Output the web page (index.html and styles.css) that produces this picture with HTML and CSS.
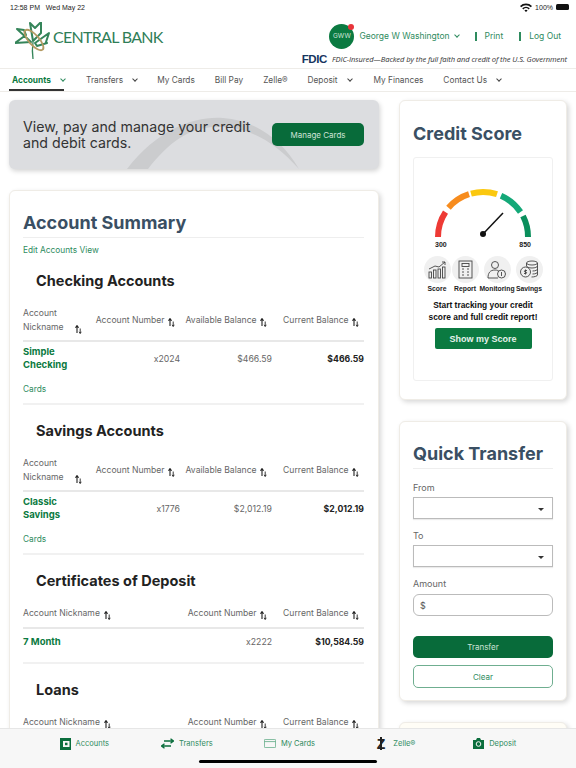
FILE: index.html
```html
<!doctype html>
<html lang="en">
<head>
    <meta charset="UTF-8">
    <title>Central Bank</title>
    <link rel="stylesheet" href="styles.css">
</head>
<body>
<svg class="defs" width="0" height="0">
    <symbol id="sort" viewBox="0 0 7 9">
        <path d="M2 8V1.800M.4 2.800L2 .6l1.600 2.200" fill="none" stroke="#222" stroke-width="1.100"/>
        <path d="M5.200 3.500V8M4.200 6.800L5.200 8.600l1-1.800" fill="none" stroke="#222" stroke-width=".9"/>
    </symbol>
</svg>

<div class="status">
    <span>12:58 PM &nbsp; Wed May 22</span>
    <span class="status-right">
        <svg width="12" height="9" viewBox="0 0 12 9"><path d="M0 3a8.500 8.500 0 0 1 12 0L10.800 4.300a6.800 6.800 0 0 0-9.600 0zM2.200 5.200a5.400 5.400 0 0 1 7.600 0L8.600 6.400a3.700 3.700 0 0 0-5.200 0zM4.400 7.400a2.300 2.300 0 0 1 3.200 0L6 9z" fill="#111"/></svg>
        100%
        <span class="battery"></span>
    </span>
</div>

<header class="top">
    <div class="logo">
        <svg width="38" height="38" viewBox="0 0 38 38">
            <g fill="none" stroke="#35855a" stroke-width="2" stroke-linejoin="round">
                <path d="M18 19L15 1l5 5 6-6v11z"/>
                <path d="M16 20L2 7l7 1 2 5-11 8z"/>
                <path d="M20 21L34 11l-3 9 1 1-10 3z"/>
            </g>
            <path d="M18 20c-1 7-1 10 0 17" fill="none" stroke="#35855a" stroke-width="1.300"/>
            <ellipse cx="19" cy="18" rx="5" ry="13" transform="rotate(-42 19 18)" fill="none" stroke="#b49a62" stroke-width="1.800"/>
        </svg>
        <span class="logo-text">CENTRAL BANK</span>
    </div>
    <div class="top-right">
        <div class="user-row">
            <div class="avatar">GWW<span class="avatar-dot"></span></div>
            <span class="user-name">George W Washington</span>
            <span class="chev chev-green user-chev"></span>
            <a class="top-link">Print</a>
            <a class="top-link">Log Out</a>
        </div>
        <div class="fdic-row">
            <span class="fdic-logo">FDIC</span>
            <span class="fdic-text">FDIC-Insured—Backed by the full faith and credit of the U.S. Government</span>
        </div>
    </div>
</header>

<nav class="nav">
    <a class="nav-item active">Accounts<span class="chev chev-green"></span></a>
    <a class="nav-item">Transfers<span class="chev"></span></a>
    <a class="nav-item">My Cards</a>
    <a class="nav-item">Bill Pay</a>
    <a class="nav-item">Zelle®</a>
    <a class="nav-item nav-deposit">Deposit<span class="chev"></span></a>
    <a class="nav-item">My Finances</a>
    <a class="nav-item">Contact Us<span class="chev"></span></a>
</nav>

<main class="main">
    <div class="left">
        <section class="banner">
            <svg class="banner-arc" width="370" height="69" viewBox="0 0 370 69"><path d="M118 69C150 28 186 16 214 18c30 2 58 20 76 51C262 38 236 26 206 27 180 28 160 42 139 69z" fill="#cbccce"/></svg>
            <p class="banner-text">View, pay and manage your credit and debit cards.</p>
            <a class="btn btn-green banner-btn">Manage Cards</a>
        </section>

        <section class="card summary">
            <h1 class="card-title">Account Summary</h1>
            <a class="link edit-link">Edit Accounts View</a>

            <h2 class="group-title">Checking Accounts</h2>
            <table class="accounts">
                <colgroup><col class="c-name"><col class="c-mid"><col class="c-bal"><col class="c-bal"></colgroup>
                <tr>
                    <th class="th-name">Account Nickname <svg class="sort"><use href="#sort"/></svg></th>
                    <th>Account Number <svg class="sort"><use href="#sort"/></svg></th>
                    <th>Available Balance <svg class="sort"><use href="#sort"/></svg></th>
                    <th>Current Balance <svg class="sort"><use href="#sort"/></svg></th>
                </tr>
                <tr>
                    <td class="acct-name">Simple Checking</td>
                    <td>x2024</td>
                    <td>$466.59</td>
                    <td class="strong">$466.59</td>
                </tr>
            </table>
            <div class="cards-row"><a class="link">Cards</a></div>

            <h2 class="group-title">Savings Accounts</h2>
            <table class="accounts">
                <colgroup><col class="c-name"><col class="c-mid"><col class="c-bal"><col class="c-bal"></colgroup>
                <tr>
                    <th class="th-name">Account Nickname <svg class="sort"><use href="#sort"/></svg></th>
                    <th>Account Number <svg class="sort"><use href="#sort"/></svg></th>
                    <th>Available Balance <svg class="sort"><use href="#sort"/></svg></th>
                    <th>Current Balance <svg class="sort"><use href="#sort"/></svg></th>
                </tr>
                <tr>
                    <td class="acct-name">Classic Savings</td>
                    <td>x1776</td>
                    <td>$2,012.19</td>
                    <td class="strong">$2,012.19</td>
                </tr>
            </table>
            <div class="cards-row"><a class="link">Cards</a></div>

            <h2 class="group-title">Certificates of Deposit</h2>
            <table class="accounts three">
                <colgroup><col class="c-wide"><col class="c-bal"><col class="c-bal"></colgroup>
                <tr>
                    <th class="th-name">Account Nickname <svg class="sort"><use href="#sort"/></svg></th>
                    <th>Account Number <svg class="sort"><use href="#sort"/></svg></th>
                    <th>Current Balance <svg class="sort"><use href="#sort"/></svg></th>
                </tr>
                <tr class="row-line">
                    <td class="acct-name">7 Month</td>
                    <td>x2222</td>
                    <td class="strong">$10,584.59</td>
                </tr>
            </table>

            <h2 class="group-title">Loans</h2>
            <table class="accounts three">
                <colgroup><col class="c-wide"><col class="c-bal"><col class="c-bal"></colgroup>
                <tr>
                    <th class="th-name">Account Nickname <svg class="sort"><use href="#sort"/></svg></th>
                    <th>Account Number <svg class="sort"><use href="#sort"/></svg></th>
                    <th>Current Balance <svg class="sort"><use href="#sort"/></svg></th>
                </tr>
            </table>
        </section>
    </div>

    <aside class="right">
        <section class="card score-card">
            <h1 class="card-title no-rule">Credit Score</h1>
            <div class="score-box">
                <svg class="gauge" width="100" height="56" viewBox="0 0 100 56">
                    <g fill="none" stroke-width="6">
                        <path d="M5 52A45 45 0 0 1 12.500 27.200" stroke="#ee3a35"/>
                        <path d="M15.500 22.800A45 45 0 0 1 36 9.200" stroke="#f78c1e"/>
                        <path d="M38 8.600A45 45 0 0 1 64 9.200" stroke="#fbc80f"/>
                        <path d="M68 10.700A45 45 0 0 1 87.500 27" stroke="#14a878"/>
                        <path d="M90 31A45 45 0 0 1 95 52" stroke="#0a8f5c"/>
                    </g>
                    <path d="M50 49L70 28" stroke="#111" stroke-width="1.500"/>
                    <circle cx="50" cy="49" r="3" fill="#111"/>
                </svg>
                <div class="gauge-labels"><span>300</span><span>850</span></div>
                <div class="features">
                    <div class="feature">
                        <span class="feature-icon">
                            <svg width="19" height="19" viewBox="0 0 19 19" fill="none" stroke="#444" stroke-width=".9"><rect x="1" y="12" width="2.500" height="6"/><rect x="5.500" y="10" width="2.500" height="8"/><rect x="10" y="9" width="2.500" height="9"/><rect x="14.500" y="7" width="2.500" height="11"/><path d="M1 9l6-3 4 1 6-5M14 2h3v3"/></svg>
                        </span>
                        <span>Score</span>
                    </div>
                    <div class="feature">
                        <span class="feature-icon">
                            <svg width="17" height="19" viewBox="0 0 17 19" fill="none" stroke="#444" stroke-width=".9"><rect x="2" y="1" width="13" height="17"/><rect x="5" y="3.500" width="7" height="3"/><path d="M5 9h2M5 12h2M5 15h2M10 9h2M10 12h2M10 15h2"/></svg>
                        </span>
                        <span>Report</span>
                    </div>
                    <div class="feature">
                        <span class="feature-icon">
                            <svg width="20" height="20" viewBox="0 0 20 20" fill="none" stroke="#444" stroke-width=".9"><circle cx="8" cy="5" r="3.500"/><path d="M1 18c0-5 2-8 7-8 2 0 3 .5 4 1.500M1 18h10"/><circle cx="14.500" cy="14" r="4"/><path d="M14.500 12v4"/></svg>
                        </span>
                        <span>Monitoring</span>
                    </div>
                    <div class="feature">
                        <span class="feature-icon">
                            <svg width="20" height="19" viewBox="0 0 20 19" fill="none" stroke="#444" stroke-width=".9"><ellipse cx="13" cy="3" rx="5.500" ry="2"/><path d="M7.500 3v3c0 1 2.500 2 5.500 2s5.500-1 5.500-2V3M18.500 6v3c0 1-2 2-5 2M18.500 9v3c0 1-2 2-5 2M18.500 12v3c0 1-3 2-6 2"/><circle cx="6.500" cy="12" r="5"/><path d="M6.500 9.500v5M8 10.500H5.800a1 1 0 0 0 0 1.500h1.400a1 1 0 0 1 0 1.500H5"/></svg>
                        </span>
                        <span>Savings</span>
                    </div>
                </div>
                <p class="score-text">Start tracking your credit score and full credit report!</p>
                <a class="score-btn">Show my Score</a>
            </div>
        </section>

        <section class="card transfer-card">
            <h1 class="card-title">Quick Transfer</h1>
            <label class="field-label">From</label>
            <div class="select"></div>
            <label class="field-label">To</label>
            <div class="select"></div>
            <label class="field-label">Amount</label>
            <div class="amount">$</div>
            <a class="btn btn-green transfer-btn">Transfer</a>
            <a class="btn btn-outline">Clear</a>
        </section>

        <section class="card next-card"></section>
    </aside>
</main>

<footer class="tabbar">
    <div class="tabs">
        <a class="tab">
            <svg width="11" height="12" viewBox="0 0 11 12"><path d="M0 0h11v12H0z" fill="#0b6e3d"/><rect x="3" y="3" width="6.500" height="6" fill="#f6f6f6"/><rect x="5" y="4.700" width="2.500" height="2.500" fill="#0b6e3d"/></svg>
            Accounts
        </a>
        <a class="tab">
            <svg width="13" height="11" viewBox="0 0 13 11" fill="none" stroke="#0b6e3d" stroke-width="1.400"><path d="M3 3h9M9.500 .8L12.500 3 9.500 5.200" /><path d="M10 8H1M3.500 5.800L.5 8l3 2.200"/></svg>
            Transfers
        </a>
        <a class="tab">
            <svg width="12" height="9" viewBox="0 0 12 9" fill="none" stroke="#5aa882" stroke-width=".8"><rect x=".4" y=".4" width="11.200" height="8.200" rx=".8"/><path d="M.4 2.600h11.200"/></svg>
            My Cards
        </a>
        <a class="tab">
            <span class="zelle-icon">Z</span>
            Zelle®
        </a>
        <a class="tab">
            <svg width="11" height="11" viewBox="0 0 11 11"><path d="M0 2h3l1-2h3l1 2h3v9H0z" fill="#0b6e3d"/><circle cx="5.500" cy="6" r="2.300" fill="none" stroke="#f6f6f6" stroke-width="1"/></svg>
            Deposit
        </a>
    </div>
    <div class="home-bar"></div>
</footer>
</body>
</html>
```

FILE: styles.css
```css
* {
    margin: 0;
    padding: 0;
    box-sizing: border-box;
}

html, body {
    height: 768px;
    overflow: hidden;
}

body {
    position: relative;
    font-family: Inter, "Open Sans", sans-serif;
    font-size: 9px;
    color: #555;
    background: #fff;
}

.defs {
    position: absolute;
}

/* status bar */
.status {
    display: flex;
    justify-content: space-between;
    align-items: center;
    height: 14px;
    padding: 0 7px 0 10px;
    font-family: "Liberation Sans", sans-serif;
    font-size: 7px;
    color: #222;
}

.status-right {
    display: flex;
    align-items: center;
    gap: 3px;
}

.battery {
    width: 13px;
    height: 6px;
    background: #111;
    border-radius: 1.5px;
}

/* header */
.top {
    display: flex;
    justify-content: space-between;
    height: 54px;
    padding: 8px 9px 0 15px;
}

.logo {
    display: flex;
    align-items: flex-start;
    height: 38px;
}

.logo-text {
    margin-top: 6px;
    font-family: Lato, sans-serif;
    font-size: 16px;
    line-height: 18px;
    letter-spacing: -0.7px;
    color: #2f7e57;
    white-space: nowrap;
}

.top-right {
    display: flex;
    flex-direction: column;
    align-items: flex-end;
}

.user-row {
    display: flex;
    align-items: center;
    height: 26px;
    margin: 1px 6px 0 0;
    color: #2e8b5e;
    font-size: 8.500px;
}

.avatar {
    position: relative;
    display: flex;
    justify-content: center;
    align-items: center;
    width: 25px;
    height: 25px;
    margin-right: 5px;
    border-radius: 50%;
    background: #0b7a41;
    color: #cfe3d8;
    font-size: 6.500px;
}

.avatar-dot {
    position: absolute;
    top: 0;
    right: 0;
    width: 6px;
    height: 6px;
    border-radius: 50%;
    background: #e8343a;
}

.top-link {
    margin-left: 16px;
    padding-left: 8px;
    border-left: 2px solid #2e8b5e;
    line-height: 9px;
    height: 9px;
}

.fdic-row {
    display: flex;
    align-items: center;
    gap: 5px;
    margin-top: 4px;
}

.fdic-logo {
    font-family: "Liberation Sans", sans-serif;
    font-weight: bold;
    font-size: 11.500px;
    color: #17365f;
    letter-spacing: -0.4px;
}

.fdic-text {
    font-family: "Open Sans", sans-serif;
    font-style: italic;
    font-size: 7.600px;
    letter-spacing: -0.1px;
    color: #333;
    white-space: nowrap;
}

/* nav */
.nav {
    display: flex;
    height: 24px;
    border-top: 1px solid #eeece8;
    border-bottom: 1px solid #eeece8;
    padding-left: 9px;
}

.nav-item {
    display: flex;
    align-items: center;
    height: 22px;
    padding: 1px 3px 0;
    margin-right: 14px;
    border-bottom: 2px solid transparent;
    font-size: 8.300px;
    color: #555;
    white-space: nowrap;
}

.nav-item.active {
    width: 55px;
    margin-right: 19px;
    color: #0b7a41;
    font-weight: 700;
    border-bottom-color: #333;
}

.nav-item.nav-deposit {
    margin-right: 16px;
}

.chev {
    flex-shrink: 0;
    display: inline-block;
    width: 4px;
    height: 4px;
    margin: -2px 0 0 10px;
    border-right: 1px solid #444;
    border-bottom: 1px solid #444;
    transform: rotate(45deg);
}

.chev-green {
    border-color: #2e8b5e;
}

.chev.user-chev {
    margin-left: 5px;
}

/* page columns */
.main {
    display: flex;
    gap: 20px;
    padding: 8px 9px 0;
}

.left {
    width: 370px;
}

.right {
    width: 168px;
}

.card {
    background: #fff;
    border: 1px solid #efece6;
    border-radius: 6px;
    box-shadow: 2px 2px 5px rgba(0, 0, 0, .16);
}

.card-title {
    padding-bottom: 2px;
    border-bottom: 1px solid #eee;
    font-size: 18px;
    line-height: 24px;
    font-weight: 700;
    color: #3a4f63;
}

.card-title.no-rule {
    border-bottom: 0;
}

.link {
    color: #2e8b5e;
    font-size: 8.300px;
}

/* banner */
.banner {
    position: relative;
    display: flex;
    justify-content: space-between;
    align-items: center;
    height: 69px;
    padding: 0 15px 0 14px;
    background: #dcdde0;
    border-radius: 6px;
    box-shadow: 1px 2px 5px rgba(0, 0, 0, .18);
    overflow: hidden;
}

.banner-arc {
    position: absolute;
    left: 0;
    top: 0;
}

.banner-text {
    position: relative;
    width: 238px;
    font-size: 14.200px;
    line-height: 15.500px;
    color: #333;
}

.btn {
    display: flex;
    justify-content: center;
    align-items: center;
    height: 23px;
    border-radius: 5px;
    font-size: 8px;
}

.btn-green {
    background: #086b3a;
    color: #cfe3d8;
}

.btn-outline {
    border: 1px solid #6fae90;
    color: #2e8b5e;
}

.banner-btn {
    position: relative;
    width: 92px;
}

/* account summary */
.summary {
    height: 600px;
    margin-top: 21px;
    padding: 20px 14px 0 13px;
}

.edit-link {
    display: block;
    margin: 6px 0 -1px;
    line-height: 12px;
}

.group-title {
    margin: 16px 0 0 13px;
    font-size: 14.500px;
    line-height: 20px;
    font-weight: 700;
    color: #222;
}

.accounts {
    width: 341px;
    margin-top: 8px;
    border-collapse: collapse;
    table-layout: fixed;
}

.c-name { width: 67px; }
.c-mid { width: 90px; }
.c-bal { width: 92px; }
.c-wide { width: 157px; }

.accounts th {
    height: 42px;
    padding-right: 5px;
    border-bottom: 2px solid #e8e8e8;
    font-weight: 400;
    font-size: 8.600px;
    line-height: 14px;
    text-align: right;
    color: #666;
    white-space: nowrap;
}

.accounts th.th-name {
    padding: 0;
    text-align: left;
    white-space: normal;
}

.three th {
    height: 29px;
}

.three th.th-name {
    white-space: nowrap;
}

.sort {
    width: 7px;
    height: 9px;
    margin-left: 1px;
    vertical-align: -4px;
}

.th-name .sort {
    margin-left: 9px;
}

.three .th-name .sort {
    margin-left: 2px;
}

.accounts td {
    height: 34px;
    text-align: right;
    color: #666;
    font-size: 8.700px;
}

.accounts td.acct-name {
    padding-bottom: 1px;
    text-align: left;
    line-height: 13.500px;
    font-size: 9.500px;
    font-weight: 700;
    color: #0b7a41;
}

.accounts td.strong {
    font-weight: 700;
    color: #222;
}

.accounts .row-line td {
    height: 35px;
    padding-bottom: 8px;
    border-bottom: 2px solid #f1f1f1;
}

.cards-row {
    height: 30px;
    padding-top: 8px;
    border-bottom: 2px solid #f1f1f1;
    line-height: 12px;
}

/* credit score */
.score-card {
    height: 300px;
    padding: 21px 13px 0;
}

.score-box {
    display: flex;
    flex-direction: column;
    align-items: center;
    height: 224px;
    margin-top: 9px;
    padding-top: 27px;
    border: 1px solid #f0f0f0;
    border-radius: 3px;
    font-family: "Liberation Sans", sans-serif;
    color: #222;
}

.gauge-labels {
    display: flex;
    justify-content: space-between;
    width: 96px;
    margin-top: 0;
    font-size: 7px;
    font-weight: 700;
}

.features {
    display: grid;
    grid-template-columns: 28px 28px 36px 28px;
    margin-top: 8px;
}

.feature {
    display: flex;
    flex-direction: column;
    align-items: center;
    gap: 2px;
    font-size: 6.800px;
    font-weight: 700;
    white-space: nowrap;
}

.feature-icon {
    display: flex;
    justify-content: center;
    align-items: center;
    width: 27px;
    height: 27px;
    border-radius: 50%;
    background: #f0f0f0;
}

.score-text {
    width: 115px;
    margin-top: 8px;
    font-size: 8.400px;
    line-height: 11.500px;
    font-weight: 700;
    text-align: center;
    color: #111;
}

.score-btn {
    display: flex;
    justify-content: center;
    align-items: center;
    width: 97px;
    height: 21px;
    margin-top: 5px;
    border-radius: 2px;
    background: #0b7a41;
    color: #e6f2ec;
    font-size: 9px;
    font-weight: 700;
}

/* quick transfer */
.transfer-card {
    height: 280px;
    margin-top: 21px;
    padding: 20px 13px 0;
}

.field-label {
    display: block;
    margin: 11px 0 4px;
    line-height: 11px;
    color: #666;
}

.card-title + .field-label {
    margin-top: 13px;
}

.select {
    position: relative;
    height: 22px;
    border: 1px solid #bbb;
    box-shadow: 0 1px 1px rgba(0, 0, 0, .08);
}

.select::after {
    content: "";
    position: absolute;
    right: 8px;
    top: 10px;
    border: 3px solid transparent;
    border-top-color: #333;
}

.amount {
    display: flex;
    align-items: center;
    height: 22px;
    margin-top: 5px;
    padding-left: 6px;
    border: 1px solid #bbb;
    border-radius: 6px;
}

.transfer-btn {
    height: 22px;
    margin: 20px 0 7px;
}

.next-card {
    height: 100px;
    margin-top: 21px;
    background: #fffdf6;
}

/* bottom tabs */
.tabbar {
    position: absolute;
    left: 0;
    right: 0;
    bottom: 0;
    height: 40px;
    padding: 0 30px 0 33px;
    background: #f7f7f7;
    border-top: 1px solid #e6e6e6;
}

.tabs {
    display: grid;
    grid-template-columns: repeat(5, 1fr);
    height: 29px;
}

.tab {
    display: flex;
    justify-content: center;
    align-items: center;
    gap: 5px;
    font-size: 7.500px;
    color: #2e8b5e;
}

.zelle-icon {
    position: relative;
    margin: 0 3px 0 8px;
    font-family: "Liberation Sans", sans-serif;
    font-weight: 700;
    font-size: 14px;
    color: #222;
}

.zelle-icon::before {
    content: "";
    position: absolute;
    left: 3.500px;
    top: 1.500px;
    bottom: 1.500px;
    width: 1.500px;
    background: #222;
}

.home-bar {
    position: absolute;
    left: 199px;
    bottom: 5px;
    width: 178px;
    height: 3px;
    border-radius: 2px;
    background: #000;
}
```
